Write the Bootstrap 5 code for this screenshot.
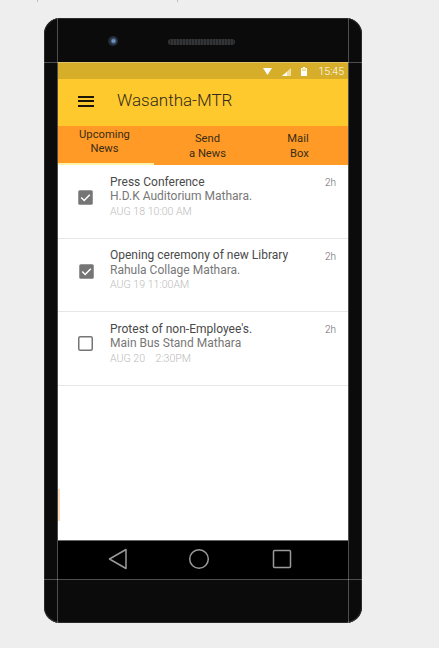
<!DOCTYPE html>
<html lang="en">
  <head>
    <meta charset="UTF-8" />
    <meta name="viewport" content="width=device-width, initial-scale=1.0" />
    <title>Wasantha-MTR</title>
    <link rel="stylesheet" href="https://cdn.jsdelivr.net/npm/bootstrap@5.3.3/dist/css/bootstrap.min.css" />
    <style>
      html, body { height: 100%; }
      body { background: #eeeeee; font-family: Roboto, "Liberation Sans", sans-serif; overflow: hidden; }
      .page-tick { position: absolute; top: 0; width: 1px; height: 2px; background: #bdbdbd; }
      .tick-left { left: 37px; }
      .tick-mid { left: 177px; }
      .phone { position: relative; width: 318px; height: 605px; margin: 18px 0 0 44px; background: #0b0b0b; border-radius: 16px; box-shadow: inset 0 0 0 1px #2a2a2a, inset 0 -1px 0 #666; }
      .bezel-top { height: 44px; padding: 18px 0 0 64px; gap: 50px; }
      .camera { width: 10px; height: 10px; border-radius: 50%; background: radial-gradient(circle at 55% 50%, #6c93c4 0 16%, #2a3442 42%, #15181d 100%); }
      .speaker { width: 67px; height: 6px; margin-top: 3px; border-radius: 3px; background: repeating-linear-gradient(90deg, #333436 0 2px, #222325 2px 3px); }
      .screen { width: 290px; margin-left: 14px; height: 517px; background: #fff; }
      .status { height: 17px; background: #d6ae2a; color: #fff; font-size: 10.500px; font-weight: 300; padding: 2px 4px 0 0; }
      .st-wifi { margin-right: 9.500px; }
      .st-signal { margin-right: 10.500px; }
      .st-battery { margin-right: 11px; }
      .appbar { height: 47px; background: #fdc92c; padding: 0 0 3px 20px; gap: 23px; }
      .burger { width: 16px; height: 11px; border-top: 2px solid #1c1608; border-bottom: 2px solid #1c1608; position: relative; }
      .burger::after { content: ""; position: absolute; left: 0; right: 0; top: 2.500px; height: 2px; background: #1c1608; }
      .app-title { font-size: 17px; font-weight: 300; color: #33291a; }
      .tabs { height: 39px; background: #ff9a27; font-size: 11.200px; line-height: 15px; color: #3a2d16; position: relative; }
      .tab-one { width: 93px; padding-top: 2px; line-height: 14px; }
      .tab-two { width: 113px; padding-top: 5px; }
      .tab-three { width: 68px; padding-top: 5px; }
      .tab-line { position: absolute; left: 0; bottom: 0; width: 96px; height: 2px; background: #fff3a8; }
      .news-row { height: 73.500px; border-bottom: 1.500px solid #e6e6e6; padding: 9.500px 12px 0 20px; }
      .tick { width: 15px; height: 15px; margin-top: 15.500px; flex: none; }
      .tick-nudge { margin-left: 1px; margin-right: -1px; }
      .tick-up { margin-top: 14.500px; }
      .news-text { width: 199px; margin-left: 17px; font-size: 12px; line-height: 14.500px; color: #777; }
      .news-head { color: #4a4a4a; }
      .news-date { font-size: 10.600px; font-weight: 300; color: #bbb; line-height: 15px; }
      .news-age { font-size: 10px; font-weight: 300; color: #666; line-height: 14px; margin: 1.500px 0 0 auto; }
      .softkeys { height: 39px; background: #000; border-top: 1px solid #666; }
      .bezel-rule { position: absolute; background: rgba(255, 255, 255, .28); }
      .rule-a { left: 0; right: 0; top: 44px; height: 1px; }
      .rule-b { left: 0; right: 0; top: 561px; height: 1px; }
      .rule-c { top: 0; bottom: 0; left: 13px; width: 1px; }
      .rule-d { top: 0; bottom: 0; left: 304px; width: 1px; }
      .side-tint { position: absolute; left: 14px; top: 471px; width: 2px; height: 32px; background: #fbdcb4; }
    </style>
  </head>
  <body>
    <div class="page-tick tick-left"></div>
    <div class="page-tick tick-mid"></div>
    <div class="phone">
      <div class="bezel-top d-flex align-items-start">
        <div class="camera"></div>
        <div class="speaker"></div>
      </div>
      <div class="screen d-flex flex-column">
        <div class="status d-flex align-items-center justify-content-end">
          <svg class="st-wifi" width="9" height="7" viewBox="0 0 9 7"><path d="M0 0h9L4.500 7z" fill="#fff"/></svg>
          <svg class="st-signal" width="9" height="8" viewBox="0 0 9 8"><path d="M9 0v8H0z" fill="#efdf9f"/><path d="M5 4v4H0z" fill="#fff"/></svg>
          <svg class="st-battery" width="6" height="9" viewBox="0 0 6 9"><path d="M2 0h2v1h2v8H0V1h2z" fill="#fff"/><path d="M1 1.500h4V4H1z" fill="#efdf9f"/></svg>
          <span>15:45</span>
        </div>
        <div class="appbar d-flex align-items-center">
          <div class="burger"></div>
          <div class="app-title">Wasantha-MTR</div>
        </div>
        <div class="tabs d-flex text-center">
          <div class="tab-one">Upcoming<br />News</div>
          <div class="tab-two">Send<br />a News</div>
          <div class="tab-three">Mail<br />&nbsp;Box</div>
          <div class="tab-line"></div>
        </div>

        <div class="news-row d-flex">
          <svg class="tick" viewBox="0 0 15 15"><rect width="14.500" height="14.500" x=".25" y=".25" rx="1.500" fill="#757575"/><path d="M3.200 7.500l3 3 5.600-5.800" fill="none" stroke="#fff" stroke-width="1.500"/></svg>
          <div class="news-text">
            <div class="news-head">Press Conference</div>
            <div>H.D.K Auditorium Mathara.</div>
            <div class="news-date">AUG 18 10:00 AM</div>
          </div>
          <div class="news-age">2h</div>
        </div>
        <div class="news-row d-flex">
          <svg class="tick tick-nudge" viewBox="0 0 15 15"><rect width="14.500" height="14.500" x=".25" y=".25" rx="1.500" fill="#757575"/><path d="M3.200 7.500l3 3 5.600-5.800" fill="none" stroke="#fff" stroke-width="1.500"/></svg>
          <div class="news-text">
            <div class="news-head">Opening ceremony of new Library</div>
            <div>Rahula Collage Mathara.</div>
            <div class="news-date">AUG 19 11:00AM</div>
          </div>
          <div class="news-age">2h</div>
        </div>
        <div class="news-row d-flex">
          <svg class="tick tick-up" viewBox="0 0 15 15"><rect width="13.500" height="13.500" x=".75" y=".75" rx="1.500" fill="#fff" stroke="#757575" stroke-width="1.500"/></svg>
          <div class="news-text">
            <div class="news-head">Protest of non-Employee's.</div>
            <div>Main Bus Stand Mathara</div>
            <div class="news-date">AUG 20 &nbsp;&nbsp; 2:30PM</div>
          </div>
          <div class="news-age">2h</div>
        </div>

        <div class="flex-grow-1"></div>
        <div class="softkeys d-flex align-items-center">
          <svg width="290" height="38" viewBox="0 -1 290 38" fill="none" stroke="#9a9a9a" stroke-width="1.500">
            <path d="M68 7.500v19L51.500 17z" stroke-linejoin="round"/>
            <circle cx="141" cy="17" r="9.300"/>
            <rect x="215.500" y="8.500" width="17" height="17" rx="1"/>
          </svg>
        </div>
      </div>
      <div class="side-tint"></div>
      <div class="bezel-rule rule-a"></div>
      <div class="bezel-rule rule-b"></div>
      <div class="bezel-rule rule-c"></div>
      <div class="bezel-rule rule-d"></div>
    </div>
  </body>
</html>
